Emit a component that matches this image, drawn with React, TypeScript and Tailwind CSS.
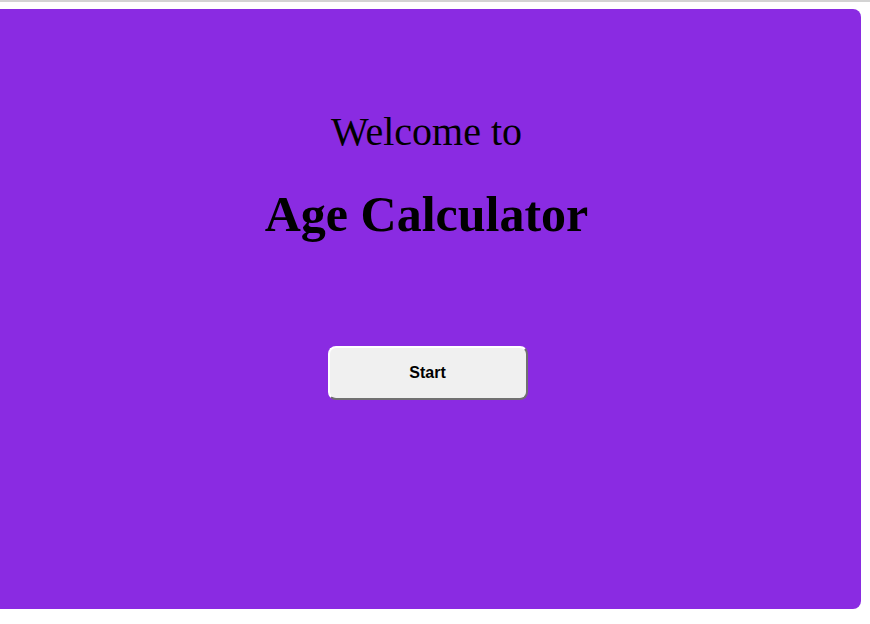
export default function App() {
  return (
    <div className="min-h-screen bg-white">
      <div className="h-[2px] w-full bg-[#d3d3d3]" />
      <div className="mt-[7px] -ml-[8px] w-[869px] h-[600px] rounded-[8px] bg-[#8a2be2] flex flex-col items-center pt-[103px] font-['Liberation_Serif',serif] text-black">
        <p className="text-[40px] leading-none">Welcome to</p>
        <h1 className="mt-[37px] text-[50px] leading-none font-bold">Age Calculator</h1>
        <button className="mt-[107px] ml-[2px] w-[200px] h-[54px] rounded-[8px] bg-[#f0f0f0] border-2 border-t-white border-l-white border-r-[#707070] border-b-[#707070] font-['Liberation_Sans',sans-serif] text-[16px] font-bold text-black">
          Start
        </button>
      </div>
    </div>
  );
}
